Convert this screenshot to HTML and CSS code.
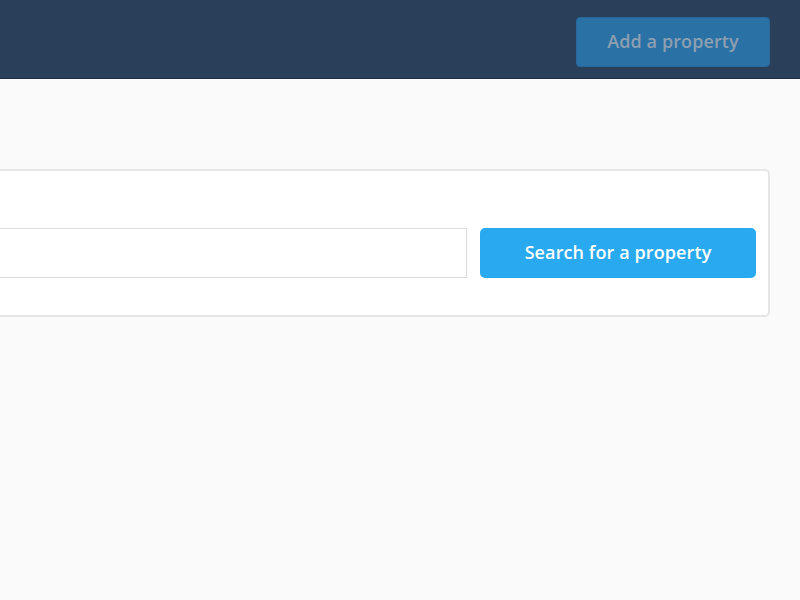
FILE: index.html
```html
<!DOCTYPE html>
<html>
<head>
	<title>Properties</title>
	<link rel="stylesheet" href="styles.css">
</head>
<body>
	<div class="header">
		<button class="add-button">Add a property</button>
	</div>
	<div class="content">
		<div class="search-card">
			<div class="search-row">
				<input class="search-input" type="text">
				<button class="search-button">Search for a property</button>
			</div>
		</div>
	</div>
</body>
</html>
```
FILE: styles.css
```css
body {
	font-family: "Open Sans", Lato, sans-serif;
	background-color: #fafafa;
	margin: 0;
	padding: 0;
}
.header {
	height: 79px;
	background-color: #2a3f5a;
	border-bottom: 1px solid #1d2d40;
	box-sizing: border-box;
	display: flex;
	justify-content: flex-end;
	align-items: flex-start;
	padding: 17px 30px 0 0;
}
.add-button {
	width: 194px;
	height: 50px;
	padding: 0 0 3px 0;
	background-color: #2a71a6;
	color: #8e9fb0;
	border: 1px solid #27679a;
	border-radius: 4px;
	font-family: "Open Sans", Lato, sans-serif;
	font-size: 18px;
	font-weight: 600;
	letter-spacing: 0.1px;
	cursor: pointer;
}
.content {
	padding: 90px 30px 0 0;
}
.search-card {
	margin-left: -10px;
	background-color: #fff;
	border: 2px solid #e6e6e6;
	border-radius: 5px;
	padding: 57px 12px 37px 0;
}
.search-row {
	display: flex;
	gap: 13px;
}
.search-input {
	flex: 1;
	height: 50px;
	box-sizing: border-box;
	border: 1px solid #dcdcdc;
	border-left: none;
	background-color: #fff;
	margin: 0;
}
.search-button {
	width: 276px;
	height: 50px;
	padding: 0 0 3px 0;
	background-color: #29a9ef;
	color: #fff;
	border: none;
	border-radius: 5px;
	font-family: "Open Sans", Lato, sans-serif;
	font-size: 18px;
	font-weight: 600;
	letter-spacing: 0.1px;
	cursor: pointer;
}
```
